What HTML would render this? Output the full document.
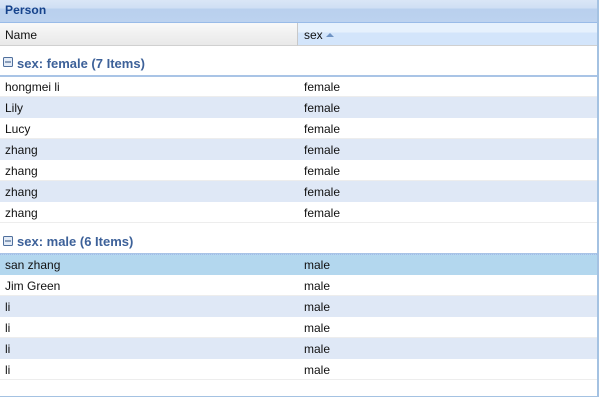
<!DOCTYPE html>
<html>
<head>
<meta charset="utf-8">
<style>
html,body{margin:0;padding:0;background:#fff;width:604px;height:406px;overflow:hidden}
body{position:relative;font-family:"Liberation Sans",sans-serif;font-size:12px;color:#111}
div{position:absolute;box-sizing:border-box}
.title{left:0;top:0;width:597px;height:23px;background:linear-gradient(#dae6f6 0,#cfdff4 8px,#b9d0ee 9px,#bcd2ef 22px);border-bottom:1px solid #99bbe8;}
.title span{position:absolute;left:5px;top:3px;font-weight:bold;font-size:12px;letter-spacing:.1px;color:#15428b}
.hd{top:23px;height:23px;border-bottom:1px solid #d0d0d0;line-height:24px}
.r{left:0;width:597px;height:21px;line-height:21px;border-bottom:1px solid #ededed;background:#fff}
.r.a{background:#dfe8f6;border-bottom-color:#dfe8f6}
.r.s{background:#b3d7ee;border-bottom-color:#b3d7ee;border-top:1px dotted #a3bae9}
.r span{position:absolute;left:5px;top:1px;white-space:nowrap}
.r b{position:absolute;left:304px;top:1px;font-weight:normal;white-space:nowrap}
.g{left:0;width:597px;height:30px;background:#fff;border-bottom:2px solid #a9c4e6}
.g span{position:absolute;left:17px;top:9px;font-weight:bold;font-size:13px;color:#3d6199;white-space:nowrap}
.g svg{position:absolute;left:3px;top:10px}
</style>
</head>
<body>
<div class="title"><span>Person</span></div>
<div class="hd" style="left:0;width:298px;background:linear-gradient(#f9f9f9,#f0f0f0 50%,#e9e9e9);border-right:1px solid #c8c8c8;padding-left:5px">Name</div>
<div class="hd" style="left:298px;width:299px;background:linear-gradient(#e6f1fd 0,#e6f1fd 9px,#d3e5fb 10px,#d3e5fb 100%);padding-left:6px;line-height:24px">sex<svg width="8" height="4" style="position:absolute;left:28px;top:10px"><path d="M0 4L4 0L8 4Z" fill="#6f93c4"/></svg></div>
<div class="g" style="top:47px"><svg width="10" height="10"><rect x=".5" y=".5" width="9" height="9" rx="1" fill="#e4ecf7" stroke="#4f6f9c"/><path d="M2 5H8" stroke="#2f4f7c"/></svg><span>sex: female (7 Items)</span></div>
<div class="r" style="top:77px;height:20px"><span style="top:0">hongmei li</span><b style="top:0">female</b></div>
<div class="r a" style="top:97px"><span>Lily</span><b>female</b></div>
<div class="r" style="top:118px"><span>Lucy</span><b>female</b></div>
<div class="r a" style="top:139px"><span>zhang</span><b>female</b></div>
<div class="r" style="top:160px"><span>zhang</span><b>female</b></div>
<div class="r a" style="top:181px"><span>zhang</span><b>female</b></div>
<div class="r" style="top:202px"><span>zhang</span><b>female</b></div>
<div class="g" style="top:225px"><svg width="10" height="10" style="top:11px"><rect x=".5" y=".5" width="9" height="9" rx="1" fill="#e4ecf7" stroke="#4f6f9c"/><path d="M2 5H8" stroke="#2f4f7c"/></svg><span>sex: male (6 Items)</span></div>
<div class="r s" style="top:254px"><span style="top:0">san zhang</span><b style="top:0">male</b></div>
<div class="r" style="top:275px"><span>Jim Green</span><b>male</b></div>
<div class="r a" style="top:296px"><span>li</span><b>male</b></div>
<div class="r" style="top:317px"><span>li</span><b>male</b></div>
<div class="r a" style="top:338px"><span>li</span><b>male</b></div>
<div class="r" style="top:359px"><span>li</span><b>male</b></div>
<div style="left:597px;top:0;width:2px;height:397px;background:#a4c2e2"></div>
<div style="left:0;top:396px;width:599px;height:1px;background:#a4c2e2"></div>
</body>
</html>
